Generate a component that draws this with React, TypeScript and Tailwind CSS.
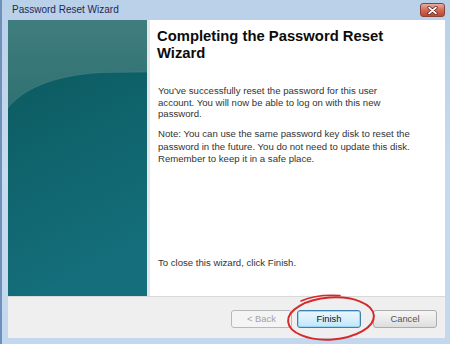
import React from "react";

const font = { fontFamily: '"Liberation Sans", Arial, sans-serif' };

function TealPanel() {
  return (
    <div className="w-[139px] h-full shrink-0 relative">
      <svg width="139" height="276" viewBox="0 0 139 276" preserveAspectRatio="none" className="block">
        <defs>
          <linearGradient id="tealBg" x1="0" y1="0" x2="0.25" y2="1">
            <stop offset="0" stopColor="#0b555b" />
            <stop offset="0.5" stopColor="#0f636b" />
            <stop offset="1" stopColor="#146e7b" />
          </linearGradient>
          <linearGradient id="tealHi" x1="0" y1="0" x2="0" y2="1">
            <stop offset="0" stopColor="#407d7e" />
            <stop offset="1" stopColor="#2f7172" />
          </linearGradient>
        </defs>
        <rect x="0" y="0" width="139" height="276" fill="url(#tealBg)" />
        <path d="M0,88 C14,70 44,55 95,52.5 L139,52 L139,0 L0,0 Z" fill="url(#tealHi)" />
        <path d="M0,88 C14,70 44,55 95,52.5 L139,52" fill="none" stroke="#5a9394" strokeOpacity="0.35" strokeWidth="1" />
      </svg>
    </div>
  );
}

function CloseButton() {
  return (
    <div className="absolute left-[418px] top-[3px] w-[25px] h-[14px] rounded-[3px] border border-[#8a4238] bg-gradient-to-b from-[#e6ada2] via-[#d46a58] to-[#c4432f] flex items-center justify-center">
      <svg width="11" height="9" viewBox="0 0 11 9">
        <path d="M2,1.5 L9,7.5 M9,1.5 L2,7.5" stroke="#5a1b14" strokeWidth="3.2" strokeLinecap="round" />
        <path d="M2,1.5 L9,7.5 M9,1.5 L2,7.5" stroke="#ffffff" strokeWidth="1.7" strokeLinecap="round" />
      </svg>
    </div>
  );
}

export default function App() {
  return (
    <div
      className="relative w-[450px] h-[344px] overflow-hidden bg-gradient-to-b from-[#b9d0e9] via-[#c7dbef] to-[#c3d8ee] flex flex-col border-l-2 border-[#6f90b9]"
      style={font}
    >
      {/* Title bar */}
      <div className="h-[20px] shrink-0 pl-[10px] text-[10px] leading-[20px] text-[#1e2858]">
        Password Reset Wizard
      </div>
      <CloseButton />

      {/* Client area */}
      <div className="flex-1 flex flex-col ml-[6px] mr-[5px]">
        <div className="h-[276px] flex">
          <TealPanel />
          <div className="flex-1 bg-white border-l-[3px] border-[#e4e7e9] pl-[8px]">
            <div className="mt-[8px] text-[14.8px] leading-[17px] font-bold text-[#0c0c0c] -ml-[1px]">
              <div className="whitespace-nowrap">Completing the Password Reset</div>
              <div>Wizard</div>
            </div>
            <div className="mt-[23px] text-[9.6px] leading-[11.5px] text-[#333333] whitespace-nowrap">
              <div>You've successfully reset the password for this user</div>
              <div>account. You will now be able to log on with this new</div>
              <div>password.</div>
            </div>
            <div className="mt-[8.5px] text-[9.6px] leading-[12.5px] text-[#333333] whitespace-nowrap">
              <div>Note: You can use the same password key disk to reset the</div>
              <div>password in the future. You do not need to update this disk.</div>
              <div>Remember to keep it in a safe place.</div>
            </div>
            <div className="mt-[91.5px] text-[9.6px] leading-[12px] text-[#333333] whitespace-nowrap">
              To close this wizard, click Finish.
            </div>
          </div>
        </div>
        <div className="h-[42px] bg-[#efefef] border-t border-[#d8d8d8] flex justify-end items-start pt-[13px] pr-[8px]">
          <div className="w-[61px] h-[18px] rounded-[3px] border border-[#b6b9bc] bg-[#f4f4f4] flex items-center justify-center text-[9.4px] text-[#a3a3a3]">
            &lt; Back
          </div>
          <div className="ml-[5px] w-[64px] h-[18px] rounded-[3px] border border-[#3c7fb1] bg-gradient-to-b from-[#eaf6fd] via-[#d9f0fc] to-[#bee6fd] flex items-center justify-center text-[9.4px] text-[#111111] shadow-[inset_0_0_0_1px_#9fd5f3]">
            Finish
          </div>
          <div className="ml-[12px] w-[64px] h-[18px] rounded-[3px] border border-[#acacac] bg-gradient-to-b from-[#f6f6f6] via-[#ebebeb] to-[#dddddd] flex items-center justify-center text-[9.4px] text-[#555555]">
            Cancel
          </div>
        </div>
      </div>
      <div className="h-[6px] shrink-0" />

      {/* Red annotation ellipse */}
      <svg className="absolute left-0 top-0 pointer-events-none" width="450" height="344" viewBox="0 0 450 344">
        <ellipse cx="329" cy="318.5" rx="43" ry="21" transform="rotate(-4 329 318.5)" fill="none" stroke="#d52a2a" strokeWidth="2" />
        <path d="M299,301 C310,296 324,294.5 338,295.5" fill="none" stroke="#d52a2a" strokeWidth="1.6" strokeLinecap="round" />
      </svg>
    </div>
  );
}
